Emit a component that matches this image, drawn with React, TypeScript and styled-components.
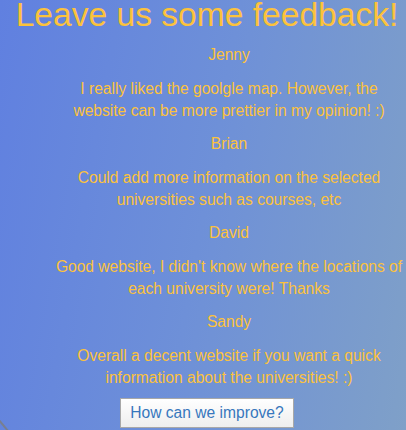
import React from "react";
import styled, { createGlobalStyle } from "styled-components";

const Global = createGlobalStyle`
  html, body { margin: 0; padding: 0; }
  body {
    width: 406px;
    height: 430px;
    overflow: hidden;
    font-family: "Liberation Sans", Arial, sans-serif;
    background: linear-gradient(100deg, #6080e0 0%, #6e90d8 50%, #7fa0c8 100%);
  }
`;

const Page = styled.main`
  display: flex;
  flex-direction: column;
  align-items: center;
  height: 430px;
  padding-left: 8px;
  box-sizing: border-box;
  position: relative;
  overflow: hidden;
`;

const Title = styled.h1`
  margin: -4px -20px 0 -20px;
  font-size: 33.6px;
  line-height: 38px;
  font-weight: 400;
  color: #fcc23c;
  white-space: nowrap;
`;

const List = styled.section`
  display: flex;
  flex-direction: column;
  align-items: center;
  width: 100%;
  padding-left: 44px;
  box-sizing: border-box;
  margin-top: 10px;
`;

const Name = styled.p`
  margin: 0 0 12px 0;
  font-size: 15.6px;
  line-height: 22px;
  color: #fcc23c;
  text-align: center;
`;

const Comment = styled.p`
  margin: 0 0 11px 0;
  font-size: 15.6px;
  line-height: 22px;
  color: #fcc23c;
  text-align: center;
  width: 352px;

  &:last-child {
    margin-bottom: 9px;
  }
`;

const Button = styled.button`
  margin-top: 0;
  font-family: "Liberation Sans", Arial, sans-serif;
  font-size: 15.6px;
  color: #3777bd;
  background: linear-gradient(#ffffff, #eeeeee);
  border: 1px solid #a8a8a8;
  padding: 0 9px;
  height: 30px;
  cursor: pointer;
`;

const CornerMark = styled.div`
  position: absolute;
  left: -2px;
  bottom: 10px;
  width: 16px;
  height: 2px;
  background: rgba(125, 125, 125, 0.8);
  transform: rotate(50deg);
  transform-origin: left center;
`;

const feedback = [
  { name: "Jenny", text: "I really liked the goolgle map. However, the website can be more prettier in my opinion! :)" },
  { name: "Brian", text: "Could add more information on the selected universities such as courses, etc" },
  { name: "David", text: "Good website, I didn't know where the locations of each university were! Thanks" },
  { name: "Sandy", text: "Overall a decent website if you want a quick information about the universities! :)" },
];

export default function App() {
  return (
    <>
      <Global />
      <Page>
        <Title>Leave us some feedback!</Title>
        <List>
          {feedback.map((f) => (
            <React.Fragment key={f.name}>
              <Name>{f.name}</Name>
              <Comment>{f.text}</Comment>
            </React.Fragment>
          ))}
        </List>
        <Button>How can we improve?</Button>
        <CornerMark />
      </Page>
    </>
  );
}
